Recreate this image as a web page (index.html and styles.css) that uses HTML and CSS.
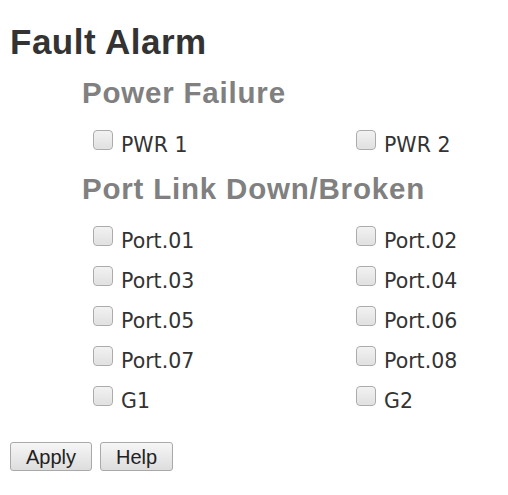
FILE: index.html
```html
<!DOCTYPE html>
<html>
<head>
<meta charset="utf-8">
<link rel="stylesheet" href="styles.css">
</head>
<body>
<div class="page">
  <h1 class="title">Fault Alarm</h1>
  <section class="group">
    <h2 class="subtitle">Power Failure</h2>
    <div class="grid">
      <label class="item"><input type="checkbox" class="box"><span>PWR 1</span></label>
      <label class="item"><input type="checkbox" class="box"><span>PWR 2</span></label>
    </div>
  </section>
  <section class="group">
    <h2 class="subtitle">Port Link Down/Broken</h2>
    <div class="grid">
      <label class="item"><input type="checkbox" class="box"><span>Port.01</span></label>
      <label class="item"><input type="checkbox" class="box"><span>Port.02</span></label>
      <label class="item"><input type="checkbox" class="box"><span>Port.03</span></label>
      <label class="item"><input type="checkbox" class="box"><span>Port.04</span></label>
      <label class="item"><input type="checkbox" class="box"><span>Port.05</span></label>
      <label class="item"><input type="checkbox" class="box"><span>Port.06</span></label>
      <label class="item"><input type="checkbox" class="box"><span>Port.07</span></label>
      <label class="item"><input type="checkbox" class="box"><span>Port.08</span></label>
      <label class="item"><input type="checkbox" class="box"><span>G1</span></label>
      <label class="item"><input type="checkbox" class="box"><span>G2</span></label>
    </div>
  </section>
  <div class="actions">
    <button class="btn" type="button">Apply</button>
    <button class="btn" type="button">Help</button>
  </div>
</div>
</body>
</html>
```

FILE: styles.css
```css
html, body {
  margin: 0;
  padding: 0;
  background: #ffffff;
}

.page {
  padding: 22px 10px 0 10px;
}

.title {
  margin: 0;
  font-family: "Liberation Sans", Arial, sans-serif;
  font-weight: bold;
  font-size: 35px;
  line-height: 40px;
  letter-spacing: 0.5px;
  color: #333333;
}

.group {
  padding-left: 72px;
}

.subtitle {
  margin: 14px 0 15px 0;
  font-family: "Liberation Sans", Arial, sans-serif;
  font-weight: bold;
  font-size: 29.5px;
  line-height: 34px;
  letter-spacing: 0.8px;
  color: #808080;
}

.group + .group .subtitle {
  margin-top: 7px;
}

.grid {
  display: grid;
  grid-template-columns: 263px auto;
  padding-left: 11px;
}

.item {
  display: flex;
  align-items: flex-start;
  height: 40px;
  font-family: "DejaVu Sans", Verdana, sans-serif;
  font-size: 20.5px;
  line-height: 40px;
  color: #333333;
}

.box {
  -webkit-appearance: none;
  appearance: none;
  margin: 5px 8px 0 0;
  width: 20px;
  height: 20px;
  border: 1px solid #ababab;
  border-radius: 4px;
  background: linear-gradient(#f2f2f2, #e0e0e0);
  box-shadow: inset 0 0 1px #ffffff;
  box-sizing: border-box;
  flex: none;
}

.actions {
  display: flex;
  gap: 8px;
  margin-top: 21px;
}

.btn {
  font-family: "Liberation Sans", Arial, sans-serif;
  font-size: 20px;
  line-height: 24px;
  height: 29px;
  padding: 0 15px;
  color: #222222;
  background: linear-gradient(#f6f6f6, #dddddd);
  border: 1px solid #a9a9a9;
  border-radius: 3px;
}
```
